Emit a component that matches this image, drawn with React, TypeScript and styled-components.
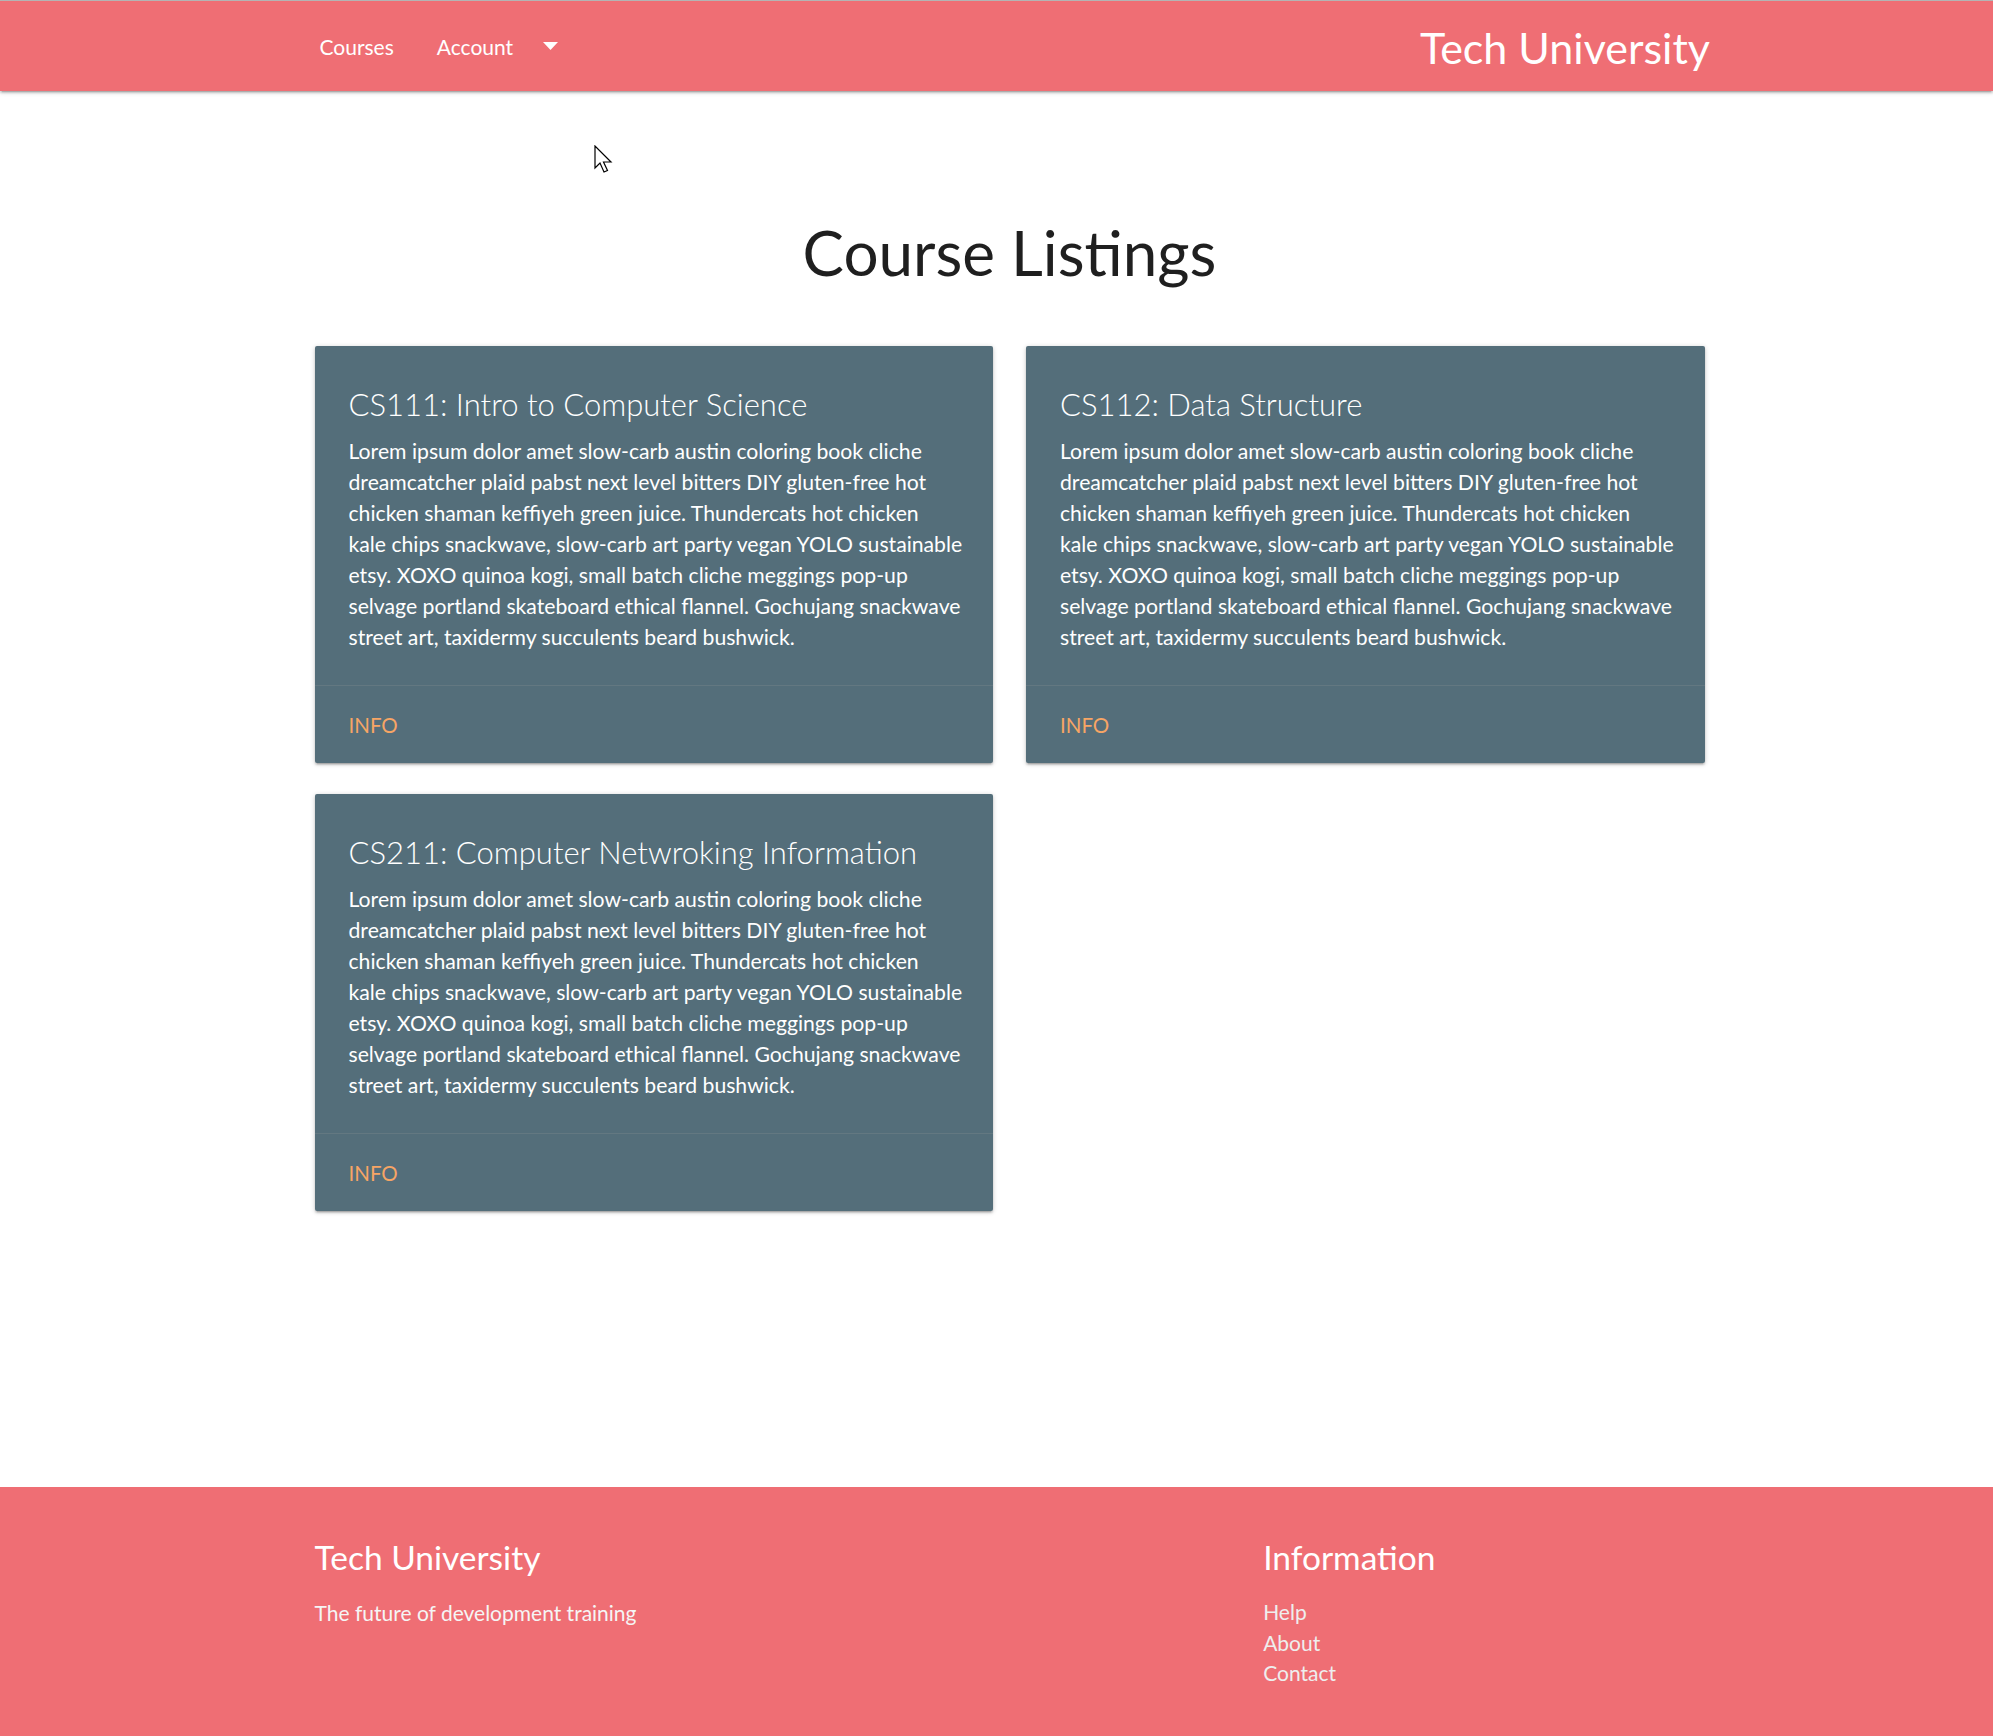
import React from "react";
import styled, { createGlobalStyle } from "styled-components";

const GlobalStyle = createGlobalStyle`
  html, body {
    margin: 0;
    padding: 0;
    background: #ffffff;
  }
  body {
    font-family: Lato, "Open Sans", "Liberation Sans", sans-serif;
    color: rgba(0, 0, 0, 0.87);
  }
  * {
    box-sizing: border-box;
  }
`;

const Page = styled.div`
  position: relative;
  min-height: 100vh;
  display: flex;
  flex-direction: column;
`;

const Container = styled.div`
  width: 1423px;
  margin-left: 298px;
`;

const NavBar = styled.nav`
  height: 91px;
  background: #ef6e74;
  border-top: 1px solid #b4b4b4;
  box-shadow: 0 2px 2px 0 rgba(0, 0, 0, 0.14), 0 3px 1px -2px rgba(0, 0, 0, 0.12),
    0 1px 5px 0 rgba(0, 0, 0, 0.2);
  position: relative;
  z-index: 2;
`;

const NavInner = styled(Container)`
  height: 100%;
  display: flex;
  align-items: center;
  justify-content: space-between;
`;

const NavLinks = styled.ul`
  list-style: none;
  margin: 0;
  padding: 0;
  display: flex;
  align-items: center;
`;

const NavItem = styled.li`
  display: flex;
  align-items: center;
  padding: 0 21.5px;
  font-size: 21px;
  color: #ffffff;
  line-height: 91px;
`;

const Caret = styled.svg`
  margin-left: 30px;
  display: block;
`;

const Brand = styled.a`
  color: #ffffff;
  font-size: 43px;
  line-height: 91px;
  padding-top: 3px;
  margin-right: 11px;
  text-decoration: none;
`;

const Main = styled.main`
  flex: 1;
`;

const Heading = styled.h1`
  margin: 125px 0 0;
  text-align: center;
  font-size: 62px;
  line-height: 72px;
  font-weight: 400;
  color: #1f1f1f;
`;

const CardGrid = styled.div`
  display: grid;
  grid-template-columns: 1fr 1fr;
  column-gap: 33px;
  row-gap: 31px;
  padding: 0 16.5px;
  margin-top: 58px;
  align-items: start;
`;

const Card = styled.article`
  background: #546e7a;
  color: #ffffff;
  border-radius: 2px;
  box-shadow: 0 2px 2px 0 rgba(0, 0, 0, 0.14), 0 3px 1px -2px rgba(0, 0, 0, 0.12),
    0 1px 5px 0 rgba(0, 0, 0, 0.2);
`;

const CardContent = styled.div`
  padding: 36px 27px 32px 34px;
`;

const CardTitle = styled.h2`
  margin: 0 0 10px;
  font-size: 31px;
  line-height: 44px;
  font-weight: 300;
`;

const CardText = styled.p`
  margin: 0;
  font-size: 21.2px;
  line-height: 31px;
`;

const TextLine = styled.span`
  display: block;
  white-space: nowrap;
`;

const CardAction = styled.div`
  border-top: 1px solid rgba(160, 160, 160, 0.2);
  padding: 23px 34px 21px;
`;

const InfoLink = styled.a`
  display: block;
  color: #f7a565;
  font-size: 20.5px;
  line-height: 33px;
  text-transform: uppercase;
  text-decoration: none;
`;

const Footer = styled.footer`
  height: 249px;
  background: #ef6e74;
  color: #ffffff;
`;

const FooterGrid = styled(Container)`
  display: grid;
  grid-template-columns: 2fr 1fr;
  padding-top: 52px;
`;

const FooterCol = styled.div`
  padding: 0 16.5px;
`;

const FooterTitle = styled.h5`
  margin: 0 0 21px;
  font-size: 33.5px;
  line-height: 37px;
  font-weight: 400;
  color: #ffffff;
`;

const FooterText = styled.p`
  margin: 0;
  font-size: 21px;
  line-height: 31px;
  color: #f5f5f5;
`;

const FooterLinks = styled.ul`
  list-style: none;
  margin: 0;
  padding: 0;
`;

const FooterLink = styled.li`
  font-size: 21px;
  line-height: 30.5px;
  color: #eeeeee;
`;

const Cursor = styled.svg`
  position: absolute;
  left: 594px;
  top: 145px;
  z-index: 5;
`;

const loremLines = [
  "Lorem ipsum dolor amet slow-carb austin coloring book cliche",
  "dreamcatcher plaid pabst next level bitters DIY gluten-free hot",
  "chicken shaman keffiyeh green juice. Thundercats hot chicken",
  "kale chips snackwave, slow-carb art party vegan YOLO sustainable",
  "etsy. XOXO quinoa kogi, small batch cliche meggings pop-up",
  "selvage portland skateboard ethical flannel. Gochujang snackwave",
  "street art, taxidermy succulents beard bushwick.",
];

const courses = [
  "CS111: Intro to Computer Science",
  "CS112: Data Structure",
  "CS211: Computer Netwroking Information",
];

export default function App() {
  return (
    <>
      <GlobalStyle />
      <Page>
        <NavBar>
          <NavInner>
            <NavLinks>
              <NavItem>Courses</NavItem>
              <NavItem>
                Account
                <Caret width="15" height="8" viewBox="0 0 15 8">
                  <path d="M0 0 H15 L7.5 8 Z" fill="#ffffff" />
                </Caret>
              </NavItem>
            </NavLinks>
            <Brand>Tech University</Brand>
          </NavInner>
        </NavBar>

        <Main>
          <Container>
            <Heading>Course Listings</Heading>
            <CardGrid>
              {courses.map((c) => (
                <Card key={c}>
                  <CardContent>
                    <CardTitle>{c}</CardTitle>
                    <CardText>
                      {loremLines.map((l) => (
                        <TextLine key={l}>{l}</TextLine>
                      ))}
                    </CardText>
                  </CardContent>
                  <CardAction>
                    <InfoLink>Info</InfoLink>
                  </CardAction>
                </Card>
              ))}
            </CardGrid>
          </Container>
        </Main>

        <Footer>
          <FooterGrid>
            <FooterCol>
              <FooterTitle>Tech University</FooterTitle>
              <FooterText>The future of development training</FooterText>
            </FooterCol>
            <FooterCol>
              <FooterTitle>Information</FooterTitle>
              <FooterLinks>
                <FooterLink>Help</FooterLink>
                <FooterLink>About</FooterLink>
                <FooterLink>Contact</FooterLink>
              </FooterLinks>
            </FooterCol>
          </FooterGrid>
        </Footer>

        <Cursor width="19" height="29" viewBox="0 0 19 29">
          <path
            d="M1 1 V23 L6 18 L10 27 L13.5 25.5 L9.5 17 H17 Z"
            fill="#ffffff"
            stroke="#000000"
            strokeWidth="1.2"
            strokeLinejoin="miter"
          />
        </Cursor>
      </Page>
    </>
  );
}
